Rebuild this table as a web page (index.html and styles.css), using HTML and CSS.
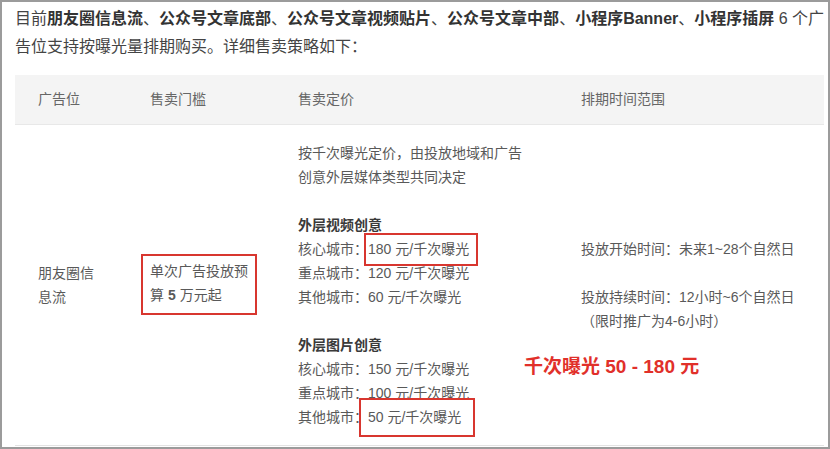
FILE: index.html
```html
<!DOCTYPE html>
<html lang="zh-CN">
<head>
    <meta charset="UTF-8">
    <meta name="viewport" content="width=device-width, initial-scale=1.0">
    <title>朋友圈广告售卖策略</title>
    <link rel="stylesheet" href="styles.css">
</head>
<body>
    <div class="frame">
        <p class="intro">目前<b>朋友圈信息流</b>、<b>公众号文章底部</b>、<b>公众号文章视频贴片</b>、<b>公众号文章中部</b>、<b>小程序Banner</b>、<b>小程序插屏</b> 6 个广<br>告位支持按曝光量排期购买。详细售卖策略如下：</p>

        <div class="table-wrap">
            <table class="plan">
                <colgroup>
                    <col class="c-slot">
                    <col class="c-min">
                    <col class="c-price">
                    <col class="c-time">
                </colgroup>
                <thead>
                    <tr>
                        <th>广告位</th>
                        <th>售卖门槛</th>
                        <th>售卖定价</th>
                        <th>排期时间范围</th>
                    </tr>
                </thead>
                <tbody>
                    <tr>
                        <td>朋友圈信息流</td>
                        <td>
                            <div class="mark-box">单次广告投放预算<b class="num">5</b>万元起</div>
                        </td>
                        <td>
                            <div class="group">按千次曝光定价，由投放地域和广告创意外层媒体类型共同决定</div>
                            <div class="group">
                                <div class="sub">外层视频创意</div>
                                <div>核心城市：<span class="mark mark-a">180 元/千次曝光</span></div>
                                <div>重点城市：120 元/千次曝光</div>
                                <div>其他城市：60 元/千次曝光</div>
                            </div>
                            <div class="group">
                                <div class="sub">外层图片创意</div>
                                <div>核心城市：150 元/千次曝光</div>
                                <div>重点城市：100 元/千次曝光</div>
                                <div>其他城市：<span class="mark mark-b">50 元/千次曝光</span></div>
                            </div>
                        </td>
                        <td>
                            <div class="group">投放开始时间：未来1~28个自然日</div>
                            <div class="group">投放持续时间：12小时~6个自然日<br>（限时推广为4-6小时）</div>
                        </td>
                    </tr>
                </tbody>
            </table>
            <div class="summary">千次曝光 50 - 180 元</div>
        </div>
    </div>
</body>
</html>
```

FILE: styles.css
```css
* {
    box-sizing: border-box;
}
body {
    margin: 0;
    background: #fff;
    font-family: "Liberation Sans", "Noto Sans CJK SC", sans-serif;
    color: #333;
}
.frame {
    width: 830px;
    height: 449px;
    border: 2px solid #9b9b9b;
    padding: 3px 4px 0 13px;
    overflow: hidden;
}
.intro {
    margin: 0;
    font-size: 16px;
    line-height: 28px;
    color: #444;
    white-space: nowrap;
}
.intro b {
    color: #333;
}
.table-wrap {
    position: relative;
    margin-top: 14px;
}
.plan {
    width: 809px;
    border-collapse: collapse;
    table-layout: fixed;
    font-size: 14px;
    line-height: 24px;
    color: #595959;
}
.c-slot { width: 112px; }
.c-min { width: 148px; }
.c-price { width: 283px; }
.c-time { width: 266px; }
.plan th {
    background: #f4f4f4;
    border-bottom: 1px solid #e8e8e8;
    font-weight: normal;
    text-align: left;
    color: #666;
    padding: 12px 23px 12px 23px;
    height: 49px;
}
.plan td {
    padding: 16px 23px;
    vertical-align: middle;
    border-bottom: 1px solid #e3e3e3;
}
.group + .group {
    margin-top: 24px;
}
.sub {
    font-weight: bold;
    color: #3a3a3a;
}
.mark-box {
    border: 2px solid #d8362f;
    margin: 0 -5px 0 -9px;
    padding: 3px 7px 6px;
}
.num {
    margin: 0 4px;
}
.mark {
    border: 2px solid #d8362f;
}
.mark-a {
    padding: 6px 7px 7px 2px;
    margin: 0 -9px 0 -4px;
}
.mark-b {
    padding: 9px 12px 10px 7px;
    margin: 0 -14px 0 -9px;
}
.summary {
    position: absolute;
    left: 509px;
    top: 280px;
    font-size: 19px;
    line-height: 24px;
    font-weight: bold;
    color: #e1302a;
}
```
